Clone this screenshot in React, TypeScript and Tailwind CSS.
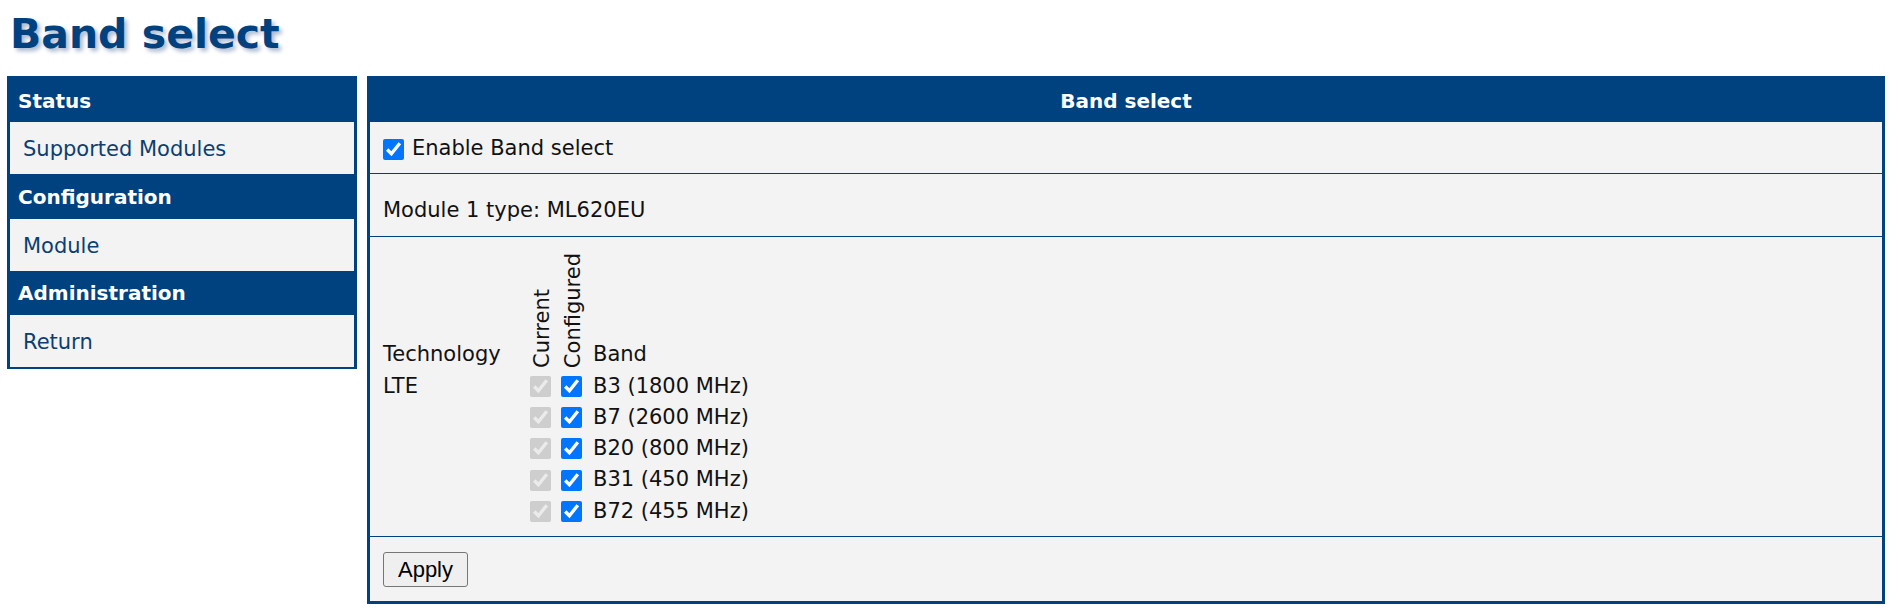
import React from "react";

const MENU = [
  { title: "Status", items: ["Supported Modules"], h: "h-[46px] pt-[3px]" },
  { title: "Configuration", items: ["Module"], h: "h-[45px]" },
  { title: "Administration", items: ["Return"], h: "h-[44px]" },
];

const BANDS = ["B3 (1800 MHz)", "B7 (2600 MHz)", "B20 (800 MHz)", "B31 (450 MHz)", "B72 (455 MHz)"];

function Check({ disabled }: { disabled?: boolean }) {
  return (
    <input
      type="checkbox"
      defaultChecked
      disabled={disabled}
      className="m-0 w-[21px] h-[21px] accent-[#0075ff] shrink-0"
    />
  );
}

export default function App() {
  return (
    <div className="min-h-[615px] bg-white font-['DejaVu_Sans',Verdana,sans-serif] text-[21px] text-[#111]">
      {/* Page title */}
      <h1 className="h-[76px] pl-[10px] pt-[8px] text-[41px] font-bold leading-[52px] text-[#004280] [text-shadow:3px_3px_4px_#a9b8cf]">
        Band select
      </h1>

      <div className="flex items-start gap-[10px] pl-[7px] pr-[9px]">
        {/* Sidebar */}
        <div className="w-[350px] shrink-0 bg-[#004280] px-[3px] pb-[2px]">
          {MENU.map((section) => (
            <div key={section.title}>
              <div className={`${section.h} flex items-center pl-[8px] font-bold text-white text-[20px]`}>
                {section.title}
              </div>
              {section.items.map((item) => (
                <div
                  key={item}
                  className="h-[52px] flex items-center pl-[13px] pt-[4px] bg-[#f3f3f3] text-[#0b3e72] text-[21px]"
                >
                  {item}
                </div>
              ))}
            </div>
          ))}
        </div>

        {/* Main panel */}
        <div className="flex-1 border-[3px] border-t-0 border-[#004280] bg-[#f3f3f3]">
          <div className="h-[46px] flex items-center justify-center pt-[3px] bg-[#004280] text-white font-bold text-[20px]">
            Band select
          </div>

          <div className="h-[52px] flex items-center gap-[8px] pl-[13px] pt-[3px] border-b border-[#004280]">
            <Check />
            <span>Enable Band select</span>
          </div>

          <div className="h-[63px] flex items-center pl-[13px] pt-[12px] border-b border-[#004280]">
            Module 1 type: ML620EU
          </div>

          <div className="h-[300px] flex flex-col justify-end pl-[13px] pb-[9px] border-b border-[#004280]">
            <div className="grid grid-cols-[144px_31px_32px_auto] items-end">
              <div className="leading-[24px] pb-[5px]">Technology</div>
              <div className="pl-[4px] pb-[3px] leading-[22px]">
                <div className="[writing-mode:vertical-rl] rotate-180">Current</div>
              </div>
              <div className="pl-[4px] pb-[3px] leading-[22px]">
                <div className="[writing-mode:vertical-rl] rotate-180">Configured</div>
              </div>
              <div className="pl-[3px] leading-[24px] pb-[5px]">Band</div>

              {BANDS.map((band, i) => (
                <React.Fragment key={band}>
                  <div className="h-[31.25px] flex items-center">{i === 0 ? "LTE" : ""}</div>
                  <div className="h-[31.25px] flex items-center pl-[3px]">
                    <Check disabled />
                  </div>
                  <div className="h-[31.25px] flex items-center pl-[3px]">
                    <Check />
                  </div>
                  <div className="h-[31.25px] flex items-center pl-[3px] whitespace-nowrap">{band}</div>
                </React.Fragment>
              ))}
            </div>
          </div>

          <div className="h-[64px] flex items-center pl-[13px]">
            <button
              type="button"
              className="w-[85px] h-[35px] bg-[#efefef] border border-[#767676] rounded-[3px] font-['Liberation_Sans',Arial,sans-serif] text-[22px] text-black"
            >
              Apply
            </button>
          </div>
        </div>
      </div>
    </div>
  );
}
